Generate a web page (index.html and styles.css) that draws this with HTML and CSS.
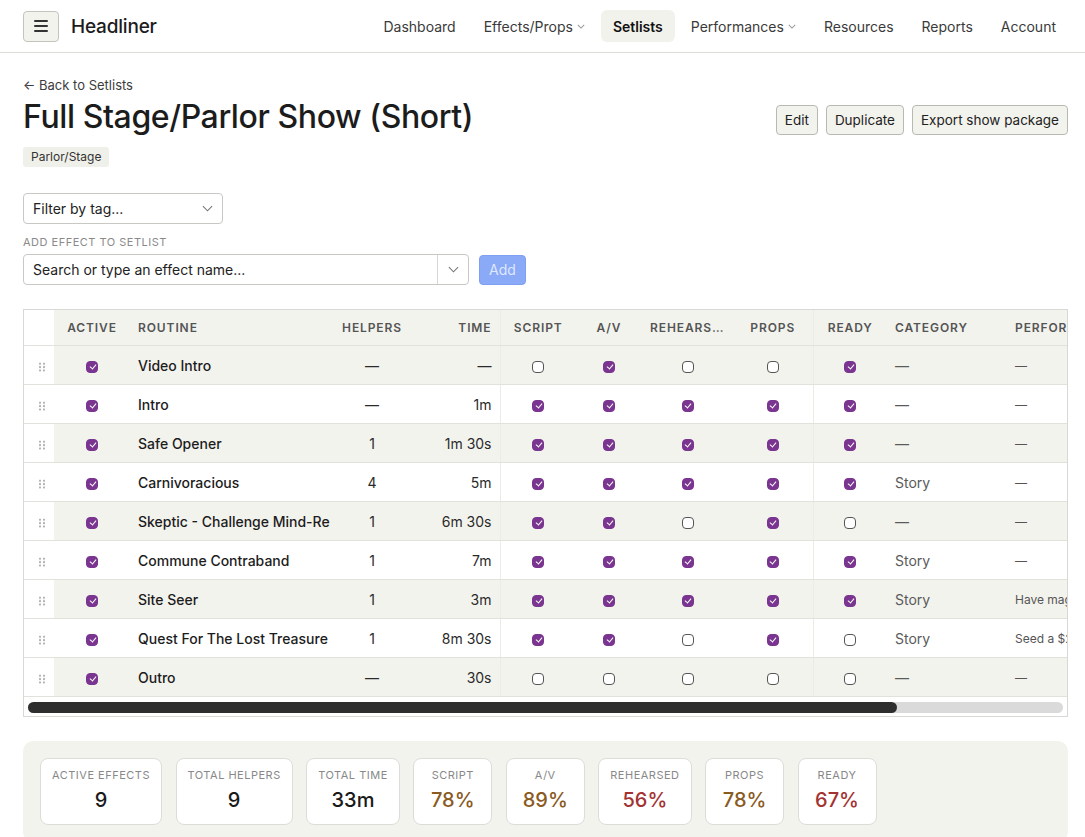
FILE: index.html
```html
<!DOCTYPE html>
<html lang="en">
<head>
    <meta charset="UTF-8">
    <meta name="viewport" content="width=device-width, initial-scale=1.0">
    <title>Full Stage/Parlor Show (Short) - Headliner</title>
    <link rel="stylesheet" href="styles.css">
</head>
<body>
    <header class="topbar">
        <div class="brand">
            <button class="menu-btn" aria-label="Menu"><span></span><span></span><span></span></button>
            <span class="brand-name">Headliner</span>
        </div>
        <nav class="nav">
            <a href="#">Dashboard</a>
            <a href="#">Effects/Props <svg class="caret" viewBox="0 0 10 6"><path d="M1 1l4 4 4-4"/></svg></a>
            <a href="#" class="active">Setlists</a>
            <a href="#">Performances <svg class="caret" viewBox="0 0 10 6"><path d="M1 1l4 4 4-4"/></svg></a>
            <a href="#">Resources</a>
            <a href="#">Reports</a>
            <a href="#">Account</a>
        </nav>
    </header>

    <main class="page">
        <div class="page-head">
            <div>
                <a href="#" class="back-link">← Back to Setlists</a>
                <h1>Full Stage/Parlor Show (Short)</h1>
            </div>
            <div class="actions">
                <button class="btn">Edit</button>
                <button class="btn">Duplicate</button>
                <button class="btn">Export show package</button>
            </div>
        </div>
        <span class="tag">Parlor/Stage</span>

        <div class="select filter">
            <span>Filter by tag...</span>
            <svg class="chev" viewBox="0 0 12 7"><path d="M1 1l5 5 5-5"/></svg>
        </div>

        <div class="field-label">ADD EFFECT TO SETLIST</div>
        <div class="add-row">
            <div class="combo">
                <span class="combo-text">Search or type an effect name...</span>
                <span class="combo-btn"><svg class="chev" viewBox="0 0 12 7"><path d="M1 1l5 5 5-5"/></svg></span>
            </div>
            <button class="add-btn" disabled>Add</button>
        </div>

        <div class="table-wrap">
            <table class="setlist">
                <colgroup>
                    <col style="width:30px"><col style="width:76px"><col style="width:200px"><col style="width:84px">
                    <col style="width:86px"><col style="width:76px"><col style="width:66px"><col style="width:91px">
                    <col style="width:80px"><col style="width:74px"><col style="width:120px"><col style="width:267px">
                </colgroup>
                <thead>
                    <tr>
                        <th class="handle-col"></th>
                        <th class="c">Active</th>
                        <th>Routine</th>
                        <th class="c">Helpers</th>
                        <th class="r">Time</th>
                        <th class="c sep">Script</th>
                        <th class="c">A/V</th>
                        <th class="c">Rehearsed</th>
                        <th class="c">Props</th>
                        <th class="c sep">Ready</th>
                        <th>Category</th>
                        <th>Performance Notes</th>
                    </tr>
                </thead>
                <tbody>
                    <tr>
                        <td class="handle-col"><span class="grip"></span></td>
                        <td class="c"><span class="cb on"></span></td>
                        <td class="name">Video Intro</td>
                        <td class="c">—</td>
                        <td class="r">—</td>
                        <td class="c sep"><span class="cb"></span></td>
                        <td class="c"><span class="cb on"></span></td>
                        <td class="c"><span class="cb"></span></td>
                        <td class="c"><span class="cb"></span></td>
                        <td class="c sep"><span class="cb on"></span></td>
                        <td class="muted">—</td>
                        <td class="note">—</td>
                    </tr>
                    <tr>
                        <td class="handle-col"><span class="grip"></span></td>
                        <td class="c"><span class="cb on"></span></td>
                        <td class="name">Intro</td>
                        <td class="c">—</td>
                        <td class="r">1m</td>
                        <td class="c sep"><span class="cb on"></span></td>
                        <td class="c"><span class="cb on"></span></td>
                        <td class="c"><span class="cb on"></span></td>
                        <td class="c"><span class="cb on"></span></td>
                        <td class="c sep"><span class="cb on"></span></td>
                        <td class="muted">—</td>
                        <td class="note">—</td>
                    </tr>
                    <tr>
                        <td class="handle-col"><span class="grip"></span></td>
                        <td class="c"><span class="cb on"></span></td>
                        <td class="name">Safe Opener</td>
                        <td class="c">1</td>
                        <td class="r">1m 30s</td>
                        <td class="c sep"><span class="cb on"></span></td>
                        <td class="c"><span class="cb on"></span></td>
                        <td class="c"><span class="cb on"></span></td>
                        <td class="c"><span class="cb on"></span></td>
                        <td class="c sep"><span class="cb on"></span></td>
                        <td class="muted">—</td>
                        <td class="note">—</td>
                    </tr>
                    <tr>
                        <td class="handle-col"><span class="grip"></span></td>
                        <td class="c"><span class="cb on"></span></td>
                        <td class="name">Carnivoracious</td>
                        <td class="c">4</td>
                        <td class="r">5m</td>
                        <td class="c sep"><span class="cb on"></span></td>
                        <td class="c"><span class="cb on"></span></td>
                        <td class="c"><span class="cb on"></span></td>
                        <td class="c"><span class="cb on"></span></td>
                        <td class="c sep"><span class="cb on"></span></td>
                        <td class="muted">Story</td>
                        <td class="note">—</td>
                    </tr>
                    <tr>
                        <td class="handle-col"><span class="grip"></span></td>
                        <td class="c"><span class="cb on"></span></td>
                        <td class="name">Skeptic - Challenge Mind-Reading</td>
                        <td class="c">1</td>
                        <td class="r">6m 30s</td>
                        <td class="c sep"><span class="cb on"></span></td>
                        <td class="c"><span class="cb on"></span></td>
                        <td class="c"><span class="cb"></span></td>
                        <td class="c"><span class="cb on"></span></td>
                        <td class="c sep"><span class="cb"></span></td>
                        <td class="muted">—</td>
                        <td class="note">—</td>
                    </tr>
                    <tr>
                        <td class="handle-col"><span class="grip"></span></td>
                        <td class="c"><span class="cb on"></span></td>
                        <td class="name">Commune Contraband</td>
                        <td class="c">1</td>
                        <td class="r">7m</td>
                        <td class="c sep"><span class="cb on"></span></td>
                        <td class="c"><span class="cb on"></span></td>
                        <td class="c"><span class="cb on"></span></td>
                        <td class="c"><span class="cb on"></span></td>
                        <td class="c sep"><span class="cb on"></span></td>
                        <td class="muted">Story</td>
                        <td class="note">—</td>
                    </tr>
                    <tr>
                        <td class="handle-col"><span class="grip"></span></td>
                        <td class="c"><span class="cb on"></span></td>
                        <td class="name">Site Seer</td>
                        <td class="c">1</td>
                        <td class="r">3m</td>
                        <td class="c sep"><span class="cb on"></span></td>
                        <td class="c"><span class="cb on"></span></td>
                        <td class="c"><span class="cb on"></span></td>
                        <td class="c"><span class="cb on"></span></td>
                        <td class="c sep"><span class="cb on"></span></td>
                        <td class="muted">Story</td>
                        <td class="note">Have magician's assistant hand out cards</td>
                    </tr>
                    <tr>
                        <td class="handle-col"><span class="grip"></span></td>
                        <td class="c"><span class="cb on"></span></td>
                        <td class="name">Quest For The Lost Treasure (Long)</td>
                        <td class="c">1</td>
                        <td class="r">8m 30s</td>
                        <td class="c sep"><span class="cb on"></span></td>
                        <td class="c"><span class="cb on"></span></td>
                        <td class="c"><span class="cb"></span></td>
                        <td class="c"><span class="cb on"></span></td>
                        <td class="c sep"><span class="cb"></span></td>
                        <td class="muted">Story</td>
                        <td class="note">Seed a $20 bill before the show</td>
                    </tr>
                    <tr>
                        <td class="handle-col"><span class="grip"></span></td>
                        <td class="c"><span class="cb on"></span></td>
                        <td class="name">Outro</td>
                        <td class="c">—</td>
                        <td class="r">30s</td>
                        <td class="c sep"><span class="cb"></span></td>
                        <td class="c"><span class="cb"></span></td>
                        <td class="c"><span class="cb"></span></td>
                        <td class="c"><span class="cb"></span></td>
                        <td class="c sep"><span class="cb"></span></td>
                        <td class="muted">—</td>
                        <td class="note">—</td>
                    </tr>
                </tbody>
            </table>
            <div class="hscroll"><div class="hscroll-track"><div class="hscroll-thumb" style="width:84%"></div></div></div>
        </div>

        <section class="stats">
            <div class="stat"><div class="stat-label">Active Effects</div><div class="stat-value">9</div></div>
            <div class="stat"><div class="stat-label">Total Helpers</div><div class="stat-value">9</div></div>
            <div class="stat"><div class="stat-label">Total Time</div><div class="stat-value">33m</div></div>
            <div class="stat"><div class="stat-label">Script</div><div class="stat-value warn">78%</div></div>
            <div class="stat"><div class="stat-label">A/V</div><div class="stat-value warn">89%</div></div>
            <div class="stat"><div class="stat-label">Rehearsed</div><div class="stat-value bad">56%</div></div>
            <div class="stat"><div class="stat-label">Props</div><div class="stat-value warn">78%</div></div>
            <div class="stat"><div class="stat-label">Ready</div><div class="stat-value bad">67%</div></div>
        </section>
    </main>
</body>
</html>
```

FILE: styles.css
```css
body {
    margin: 0;
    font-family: Inter, "Noto Sans", Arial, sans-serif;
    color: #1c1c1c;
    background: #fff;
    overflow: hidden;
}

button {
    font-family: inherit;
}

/* Top bar */
.topbar {
    height: 52px;
    display: flex;
    align-items: center;
    justify-content: space-between;
    padding: 0 17px 0 23px;
    border-bottom: 1px solid #dcdcd8;
}

.brand {
    display: flex;
    align-items: center;
    gap: 12px;
}

.menu-btn {
    width: 36px;
    height: 31px;
    display: flex;
    flex-direction: column;
    justify-content: center;
    align-items: center;
    gap: 3px;
    background: #f3f3ee;
    border: 1px solid #c4c4bf;
    border-radius: 4px;
    padding: 0;
}

.menu-btn span {
    width: 14px;
    height: 2px;
    background: #333;
    border-radius: 1px;
}

.brand-name {
    font-size: 19px;
    font-weight: 500;
    letter-spacing: -0.2px;
}

.nav {
    display: flex;
    align-items: center;
    gap: 4px;
}

.nav a {
    display: flex;
    align-items: center;
    gap: 4px;
    height: 32px;
    padding: 0 12px;
    border-radius: 6px;
    color: #3a3a3a;
    font-size: 14px;
    text-decoration: none;
}

.nav a.active {
    background: #f2f2ec;
    color: #111;
    font-weight: 600;
}

.caret {
    width: 8px;
    height: 5px;
    fill: none;
    stroke: #999;
    stroke-width: 1.3;
}

/* Page */
.page {
    padding: 24px 17px 0 23px;
}

.page-head {
    display: flex;
    justify-content: space-between;
    align-items: flex-end;
}

.back-link {
    display: block;
    font-size: 13px;
    line-height: 16px;
    color: #3c3c3c;
    text-decoration: none;
}

h1 {
    margin: 5px 0 0;
    font-size: 32px;
    line-height: 38px;
    font-weight: 500;
    letter-spacing: -0.4px;
}

.actions {
    display: flex;
    gap: 8px;
    margin-bottom: 1px;
}

.btn {
    height: 30px;
    padding: 0 8px;
    background: #f3f3ee;
    border: 1px solid #b9b9b4;
    border-radius: 4px;
    font-size: 13.5px;
    color: #222;
}

.tag {
    display: inline-block;
    margin-top: 11px;
    padding: 3px 8px;
    background: #f0f0ea;
    border-radius: 3px;
    font-size: 12px;
    line-height: 14px;
    color: #333;
}

/* Filter + add */
.select {
    box-sizing: border-box;
    width: 200px;
    height: 31px;
    margin-top: 26px;
    display: flex;
    align-items: center;
    justify-content: space-between;
    padding: 0 9px;
    border: 1px solid #c8c8c4;
    border-radius: 4px;
    font-size: 14px;
    color: #222;
}

.chev {
    width: 11px;
    height: 7px;
    fill: none;
    stroke: #777;
    stroke-width: 1.2;
}

.field-label {
    margin-top: 11px;
    font-size: 11px;
    line-height: 14px;
    letter-spacing: 0.5px;
    color: #8a8a8a;
}

.add-row {
    display: flex;
    align-items: center;
    gap: 10px;
    margin-top: 5px;
}

.combo {
    box-sizing: border-box;
    width: 446px;
    height: 31px;
    display: flex;
    align-items: center;
    border: 1px solid #c8c8c4;
    border-radius: 4px;
    font-size: 14px;
}

.combo-text {
    flex: 1;
    padding-left: 9px;
    color: #222;
}

.combo-btn {
    width: 30px;
    height: 100%;
    display: flex;
    align-items: center;
    justify-content: center;
    border-left: 1px solid #d8d8d4;
}

.add-btn {
    height: 30px;
    padding: 0 9px;
    background: #8aa9f7;
    border: 1px solid #7e9ff2;
    border-radius: 4px;
    font-size: 14px;
    color: #dfe8ff;
}

/* Table */
.table-wrap {
    margin-top: 24px;
    border: 1px solid #d8d8d4;
    overflow: hidden;
}

.setlist {
    width: 1250px;
    table-layout: fixed;
    border-collapse: collapse;
    font-size: 14px;
}

.setlist th {
    height: 35px;
    padding: 0 8px;
    background: #f3f3ee;
    font-size: 12px;
    font-weight: 600;
    letter-spacing: 0.9px;
    text-transform: uppercase;
    color: #555;
    text-align: left;
    white-space: nowrap;
    overflow: hidden;
    text-overflow: ellipsis;
    border-bottom: 1px solid #e2e2dc;
}

.setlist td {
    height: 38px;
    padding: 0 8px;
    border-bottom: 1px solid #e2e2dc;
    white-space: nowrap;
    overflow: hidden;
    color: #2a2a2a;
}

.setlist tbody tr:nth-child(odd) td {
    background: #f3f3ee;
}

.setlist .handle-col,
.setlist tbody tr td.handle-col {
    background: #fff;
    padding: 0 0 0 6px;
    text-align: center;
}

.setlist .c { text-align: center; }
.setlist .r { text-align: right; }
.setlist .sep { border-left: 1px solid #ecece6; }

.setlist .name {
    padding-right: 0;
    font-weight: 500;
    color: #1c1c1c;
    text-overflow: clip;
}

.setlist .muted {
    color: #5a5a5a;
}

.setlist .note {
    font-size: 12px;
    color: #555;
}

.grip {
    display: inline-block;
    width: 8px;
    height: 10px;
    vertical-align: middle;
    background: radial-gradient(circle, #b3b3b3 1.1px, transparent 1.4px) 0 0 / 4px 3.4px;
}

.cb {
    box-sizing: border-box;
    display: inline-block;
    position: relative;
    width: 12px;
    height: 12px;
    vertical-align: middle;
    border: 1px solid #555;
    border-radius: 4px;
    background: #fff;
}

.cb.on {
    background: #7a3590;
    border-color: #7a3590;
}

.cb.on::after {
    content: "";
    position: absolute;
    left: 3.5px;
    top: 1.5px;
    width: 3px;
    height: 5px;
    border: solid #fff;
    border-width: 0 1.3px 1.3px 0;
    transform: rotate(40deg);
}

/* Horizontal scroll bar under the table */
.hscroll {
    padding: 5px 4px 3px;
    background: #fff;
}

.hscroll-track {
    height: 11px;
    background: #dadada;
    border-radius: 6px;
}

.hscroll-thumb {
    height: 100%;
    background: #2e2e2e;
    border-radius: 6px;
}

/* Stats */
.stats {
    margin-top: 24px;
    padding: 17px;
    display: flex;
    gap: 13.5px;
    background: #f3f3ee;
    border-radius: 10px;
}

.stat {
    box-sizing: border-box;
    min-width: 79px;
    padding: 9px 11px 12px;
    background: #fff;
    border: 1px solid #dcdcd8;
    border-radius: 8px;
    text-align: center;
}

.stat-label {
    font-size: 11px;
    line-height: 14px;
    letter-spacing: 0.5px;
    text-transform: uppercase;
    color: #888;
    white-space: nowrap;
}

.stat-value {
    margin-top: 6px;
    font-size: 20px;
    line-height: 24px;
    font-weight: 500;
    color: #1a1a1a;
}

.stat-value.warn { color: #8a5a1f; }
.stat-value.bad { color: #a33232; }
```
